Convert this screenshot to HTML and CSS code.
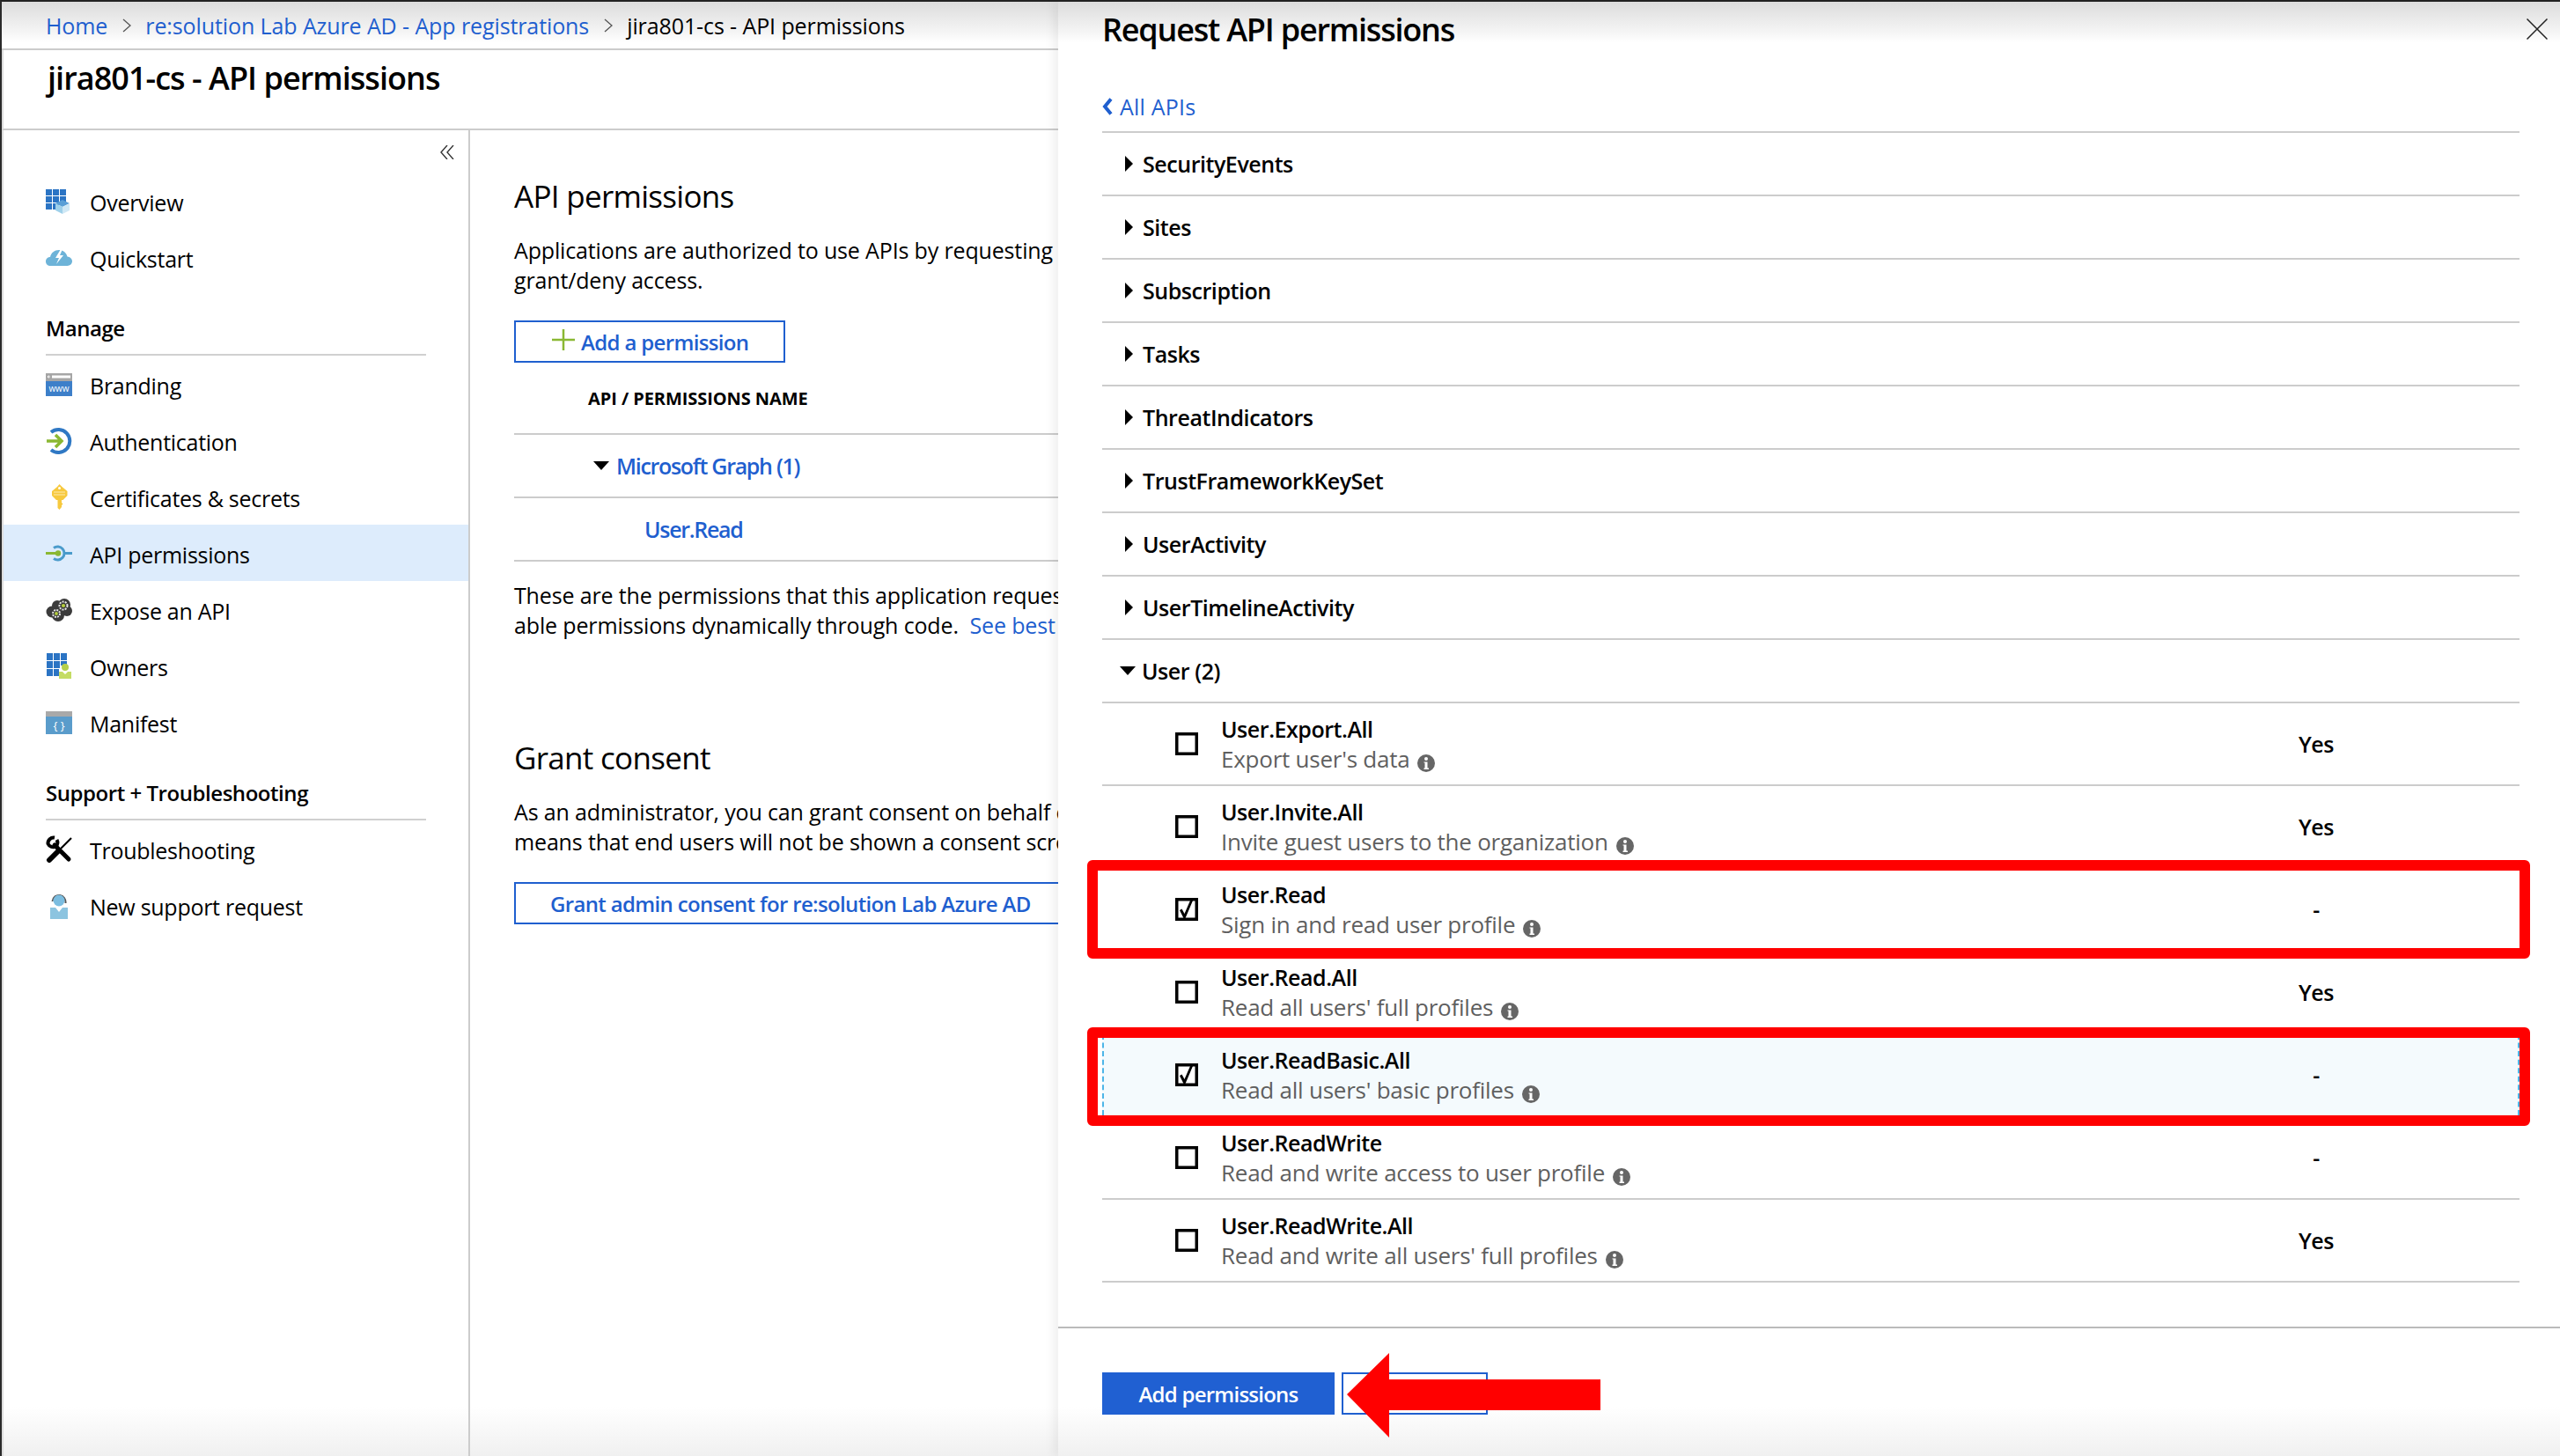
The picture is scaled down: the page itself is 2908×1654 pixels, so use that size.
FILE: index.html
```html
<!DOCTYPE html>
<html lang="en">
<head>
<meta charset="utf-8">
<title>jira801-cs - API permissions</title>
<link rel="stylesheet" href="styles.css">
</head>
<body>
<div class="page">
  <div class="blade">
    <nav class="crumbs">
      <a href="#">Home</a>
      <svg class="crumb-sep" viewBox="0 0 10 16"><path d="M1 1l8 7-8 7"/></svg>
      <a href="#">re:solution Lab Azure AD - App registrations</a>
      <svg class="crumb-sep" viewBox="0 0 10 16"><path d="M1 1l8 7-8 7"/></svg>
      <span>jira801-cs - API permissions</span>
    </nav>
    <h1 class="blade-title">jira801-cs - API permissions</h1>
    <div class="blade-body">
      <aside class="nav">
        <div class="collapse"><svg viewBox="0 0 16 16"><path d="M8 0L1 8l7 8M15 0L8 8l7 8"/></svg></div>
        <a class="nav-item" href="#">
          <svg class="ico" viewBox="0 0 30 32"><g fill="#2b74c4"><rect x="0" y="3" width="7" height="7"/><rect x="8" y="3" width="7" height="7"/><rect x="16" y="3" width="7" height="7"/><rect x="0" y="11" width="7" height="7"/><rect x="8" y="11" width="7" height="7"/><rect x="16" y="11" width="7" height="7"/><rect x="0" y="19" width="7" height="7"/><rect x="8" y="19" width="7" height="7"/></g><path fill="#5a9fd6" d="M19 15l8 4-8 4-8-4z"/><path fill="#9ed0ea" d="M11 19l8 4v8l-8-4z"/><path fill="#cfe8f5" d="M27 19l-8 4v8l8-4z"/></svg>
          <span>Overview</span></a>
        <a class="nav-item" href="#">
          <svg class="ico" viewBox="0 0 30 32"><path fill="#6db3d8" d="M5 26c-3 0-5-2.300-5-5s2-5 5-5c1-5 5-8 10-8 4.500 0 8.500 3 9.500 7.500 3 .2 5.500 2.400 5.500 5.300 0 3-2.500 5.200-5.500 5.200z"/><path fill="#fff" d="M17 7l-6 10h4l-3 7 8-10h-4l3-7z"/></svg>
          <span>Quickstart</span></a>
        <h2 class="nav-head">Manage</h2>
        <a class="nav-item" href="#">
          <svg class="ico" viewBox="0 0 30 32"><rect y="4" width="30" height="26" fill="#3d7fc9"/><rect y="4" width="30" height="9" fill="#a6a6a6"/><rect x="7" y="6.500" width="21" height="3" fill="#fff"/><path d="M5 8H2m1.500-1.500L2 8l1.500 1.500" stroke="#fff" fill="none"/><text x="15" y="25" class="ico-text">www</text></svg>
          <span>Branding</span></a>
        <a class="nav-item" href="#">
          <svg class="ico" viewBox="0 0 30 32"><path fill="none" stroke="#2f78c4" stroke-width="4" d="M6 7A13 13 0 1 1 6 27"/><path fill="none" stroke="#8ab833" stroke-width="3.500" d="M1 17h17M11 10l7 7-7 7"/></svg>
          <span>Authentication</span></a>
        <a class="nav-item" href="#">
          <svg class="ico" viewBox="0 0 30 32"><path fill="#f7c93e" d="M15.500 2l3 3 6 5v5l-5 5h-1.500v3l1.500 1.500-1.500 1.500v2l-2.500 3-2-2V20h-1.500l-5-5v-5l6-5z"/><circle cx="15.500" cy="6.500" r="1.500" fill="#fff"/><path stroke="#fbe08a" stroke-width="1.500" d="M9 11h13M9 14h13"/></svg>
          <span>Certificates &amp; secrets</span></a>
        <a class="nav-item active" href="#">
          <svg class="ico" viewBox="0 0 30 32"><path fill="none" stroke="#4a9bcb" stroke-width="3" d="M9 10.500a7.500 7.500 0 1 1 0 12M22 16.500h8"/><path stroke="#8ab833" stroke-width="3" d="M0 16.500h14"/><circle cx="14" cy="16.500" r="3.200" fill="#8ab833"/></svg>
          <span>API permissions</span></a>
        <a class="nav-item" href="#">
          <svg class="ico" viewBox="0 0 30 32"><g fill="#3b3b3b"><circle cx="7" cy="19" r="6.500"/><circle cx="13" cy="12" r="6"/><circle cx="21" cy="11" r="7"/><circle cx="24" cy="18" r="6"/><circle cx="14" cy="23" r="7"/></g><g fill="none" stroke="#e8e8e8"><circle cx="12" cy="21" r="4" stroke-width="2" stroke-dasharray="2 1.100"/><circle cx="20" cy="12" r="4.500" stroke-width="2" stroke-dasharray="2 1.200"/></g><circle cx="12" cy="21" r="1.900" fill="#b6cf3f"/><circle cx="20" cy="12" r="2.100" fill="#b6cf3f"/></svg>
          <span>Expose an API</span></a>
        <a class="nav-item" href="#">
          <svg class="ico" viewBox="0 0 30 32"><g fill="#2b74c4"><rect x="1" y="2" width="7" height="8"/><rect x="9" y="2" width="7" height="8"/><rect x="17" y="2" width="7" height="8"/><rect x="1" y="11" width="7" height="8"/><rect x="9" y="11" width="7" height="8"/><rect x="17" y="11" width="7" height="5"/><rect x="1" y="20" width="7" height="8"/><rect x="9" y="20" width="6" height="8"/></g><circle cx="22" cy="18" r="4" fill="#b5d04a"/><path fill="#c4dc64" d="M15 23h4l3 3 3-3h4v8H15z"/></svg>
          <span>Owners</span></a>
        <a class="nav-item" href="#">
          <svg class="ico" viewBox="0 0 30 32"><rect y="4" width="30" height="6" fill="#a9a9a9"/><rect y="10" width="30" height="20" fill="#5a9ccb"/><text x="15" y="25" class="ico-text ico-brace">{ }</text></svg>
          <span>Manifest</span></a>
        <h2 class="nav-head">Support + Troubleshooting</h2>
        <a class="nav-item" href="#">
          <svg class="ico" viewBox="0 0 30 32"><path stroke="#000" stroke-width="2.200" d="M29 4L17 16"/><path stroke="#000" stroke-width="6" stroke-linecap="round" d="M14 19L4 29"/><path stroke="#000" stroke-width="5" stroke-linecap="round" d="M10 12l16 16"/><path fill="none" stroke="#000" stroke-width="4" d="M10 3.500a6.500 6.500 0 0 0-7.500 7 6.500 6.500 0 0 0 9 3 6.500 6.500 0 0 0 1-7.500"/></svg>
          <span>Troubleshooting</span></a>
        <a class="nav-item" href="#">
          <svg class="ico" viewBox="0 0 30 32"><path fill="none" stroke="#555" stroke-width="2" d="M7.500 12a7.500 8 0 1 1 15 2"/><circle cx="15" cy="11" r="6.500" fill="#7bbde0"/><path fill="#8cc4e0" d="M5 19h6l4 5 4-5h6v13H5z"/></svg>
          <span>New support request</span></a>
      </aside>
      <main class="content">
        <h2 class="section-title">API permissions</h2>
        <p class="copy"><span>Applications are authorized to use APIs by requesting</span><span>grant/deny access.</span></p>
        <button class="outline-btn add-btn" type="button"><svg class="plus" viewBox="0 0 26 24"><path d="M13 0v24M0 12h26"/></svg>Add a permission</button>
        <div class="table">
          <div class="table-head">API / PERMISSIONS NAME</div>
          <div class="table-row table-group"><i class="caret-down small"></i><a href="#">Microsoft Graph (1)</a></div>
          <div class="table-row table-item"><a href="#">User.Read</a></div>
        </div>
        <p class="copy after-table"><span>These are the permissions that this application requests</span><span>able permissions dynamically through code.&nbsp; <a href="#">See best</a></span></p>
        <h2 class="section-title grant">Grant consent</h2>
        <p class="copy"><span>As an administrator, you can grant consent on behalf of</span><span>means that end users will not be shown a consent screen</span></p>
        <button class="outline-btn grant-btn" type="button">Grant admin consent for re:solution Lab Azure AD</button>
      </main>
    </div>
  </div>

  <section class="panel">
    <header class="panel-head">
      <h2 class="panel-title">Request API permissions</h2>
      <svg class="close" viewBox="0 0 24 24"><path d="M0.500 0.500l23 23M23.500 0.500l-23 23"/></svg>
    </header>
    <div class="panel-scroll">
      <a class="back" href="#"><svg viewBox="0 0 12 20"><path d="M10 1.500L3 10l7 8.500"/></svg>All APIs</a>
      <div class="groups">
        <div class="group"><i class="caret-right"></i>SecurityEvents</div>
        <div class="group"><i class="caret-right"></i>Sites</div>
        <div class="group"><i class="caret-right"></i>Subscription</div>
        <div class="group"><i class="caret-right"></i>Tasks</div>
        <div class="group"><i class="caret-right"></i>ThreatIndicators</div>
        <div class="group"><i class="caret-right"></i>TrustFrameworkKeySet</div>
        <div class="group"><i class="caret-right"></i>UserActivity</div>
        <div class="group"><i class="caret-right"></i>UserTimelineActivity</div>
        <div class="group"><i class="caret-down"></i>User (2)</div>

        <div class="perm">
          <svg class="check" viewBox="0 0 26 26"><rect x="1.750" y="1.750" width="22.500" height="22.500"/></svg>
          <div class="perm-text"><div class="perm-name">User.Export.All</div><div class="perm-desc">Export user's data<svg class="info" viewBox="0 0 20 20"><circle cx="10" cy="10" r="10"/><circle class="info-i" cx="10" cy="5" r="2"/><path class="info-i" d="M7.500 8.500h4v7h1.500v1.500H7.500v-1.500h1v-6h-1z"/></svg></div></div>
          <div class="perm-admin">Yes</div>
        </div>
        <div class="perm">
          <svg class="check" viewBox="0 0 26 26"><rect x="1.750" y="1.750" width="22.500" height="22.500"/></svg>
          <div class="perm-text"><div class="perm-name">User.Invite.All</div><div class="perm-desc">Invite guest users to the organization<svg class="info" viewBox="0 0 20 20"><circle cx="10" cy="10" r="10"/><circle class="info-i" cx="10" cy="5" r="2"/><path class="info-i" d="M7.500 8.500h4v7h1.500v1.500H7.500v-1.500h1v-6h-1z"/></svg></div></div>
          <div class="perm-admin">Yes</div>
        </div>
        <div class="perm mark-a">
          <svg class="check" viewBox="0 0 26 26"><rect x="1.750" y="1.750" width="22.500" height="22.500"/><path class="tick" d="M5 14l2.500-1.500 3 5.500L17 3h3L11.500 23h-2z"/></svg>
          <div class="perm-text"><div class="perm-name">User.Read</div><div class="perm-desc">Sign in and read user profile<svg class="info" viewBox="0 0 20 20"><circle cx="10" cy="10" r="10"/><circle class="info-i" cx="10" cy="5" r="2"/><path class="info-i" d="M7.500 8.500h4v7h1.500v1.500H7.500v-1.500h1v-6h-1z"/></svg></div></div>
          <div class="perm-admin">-</div>
        </div>
        <div class="perm">
          <svg class="check" viewBox="0 0 26 26"><rect x="1.750" y="1.750" width="22.500" height="22.500"/></svg>
          <div class="perm-text"><div class="perm-name">User.Read.All</div><div class="perm-desc">Read all users' full profiles<svg class="info" viewBox="0 0 20 20"><circle cx="10" cy="10" r="10"/><circle class="info-i" cx="10" cy="5" r="2"/><path class="info-i" d="M7.500 8.500h4v7h1.500v1.500H7.500v-1.500h1v-6h-1z"/></svg></div></div>
          <div class="perm-admin">Yes</div>
        </div>
        <div class="perm mark-b">
          <svg class="check" viewBox="0 0 26 26"><rect x="1.750" y="1.750" width="22.500" height="22.500"/><path class="tick" d="M5 14l2.500-1.500 3 5.500L17 3h3L11.500 23h-2z"/></svg>
          <div class="perm-text"><div class="perm-name">User.ReadBasic.All</div><div class="perm-desc">Read all users' basic profiles<svg class="info" viewBox="0 0 20 20"><circle cx="10" cy="10" r="10"/><circle class="info-i" cx="10" cy="5" r="2"/><path class="info-i" d="M7.500 8.500h4v7h1.500v1.500H7.500v-1.500h1v-6h-1z"/></svg></div></div>
          <div class="perm-admin">-</div>
        </div>
        <div class="perm">
          <svg class="check" viewBox="0 0 26 26"><rect x="1.750" y="1.750" width="22.500" height="22.500"/></svg>
          <div class="perm-text"><div class="perm-name">User.ReadWrite</div><div class="perm-desc">Read and write access to user profile<svg class="info" viewBox="0 0 20 20"><circle cx="10" cy="10" r="10"/><circle class="info-i" cx="10" cy="5" r="2"/><path class="info-i" d="M7.500 8.500h4v7h1.500v1.500H7.500v-1.500h1v-6h-1z"/></svg></div></div>
          <div class="perm-admin">-</div>
        </div>
        <div class="perm">
          <svg class="check" viewBox="0 0 26 26"><rect x="1.750" y="1.750" width="22.500" height="22.500"/></svg>
          <div class="perm-text"><div class="perm-name">User.ReadWrite.All</div><div class="perm-desc">Read and write all users' full profiles<svg class="info" viewBox="0 0 20 20"><circle cx="10" cy="10" r="10"/><circle class="info-i" cx="10" cy="5" r="2"/><path class="info-i" d="M7.500 8.500h4v7h1.500v1.500H7.500v-1.500h1v-6h-1z"/></svg></div></div>
          <div class="perm-admin">Yes</div>
        </div>
      </div>
    </div>
    <footer class="panel-foot">
      <button class="primary-btn" type="button">Add permissions</button>
      <span class="ghost-btn"></span>
      <svg class="arrow" viewBox="0 0 288 96"><path d="M0 47L48 0v30h240v35H48v31z"/></svg>
    </footer>
  </section>
</div>
</body>
</html>
```

FILE: styles.css
```css
* { box-sizing: border-box; }
html, body { margin: 0; padding: 0; }
body {
  width: 2908px;
  height: 1654px;
  overflow: hidden;
  font-family: "Open Sans", "Liberation Sans", sans-serif;
  font-size: 25px;
  letter-spacing: -0.27px;
  color: #000;
  background: #fff;
}
a { color: #1f5fcf; text-decoration: none; }
h1, h2, p { margin: 0; }
.page {
  display: flex;
  width: 2908px;
  height: 1654px;
  border-top: 2px solid #222;
  border-left: 2px solid #2a2a2a;
  background:
    linear-gradient(#dcdcdc, #f6f6f6 36px, #fff 46px, #fff 0) top / 100% 46px no-repeat,
    linear-gradient(#fff, #f0f0f0) bottom / 100% 56px no-repeat,
    #fff;
}

/* left blade */
.blade { width: 1200px; flex: none; overflow: hidden; }
.crumbs {
  display: flex;
  align-items: center;
  height: 55px;
  padding-left: 50px;
  border-bottom: 2px solid #ccc;
  white-space: nowrap;
  letter-spacing: -0.1px;
}
.crumb-sep { width: 10px; height: 16px; margin: 0 16px 0 17px; }
.crumb-sep path { fill: none; stroke: #555; stroke-width: 1.3; }
.blade-title {
  height: 91px;
  padding: 0 0 0 50px;
  font-size: 36px;
  line-height: 64px;
  font-weight: 600;
  letter-spacing: -0.96px;
  border-bottom: 2px solid #ccc;
  border-left: 2px solid #ddd;
  white-space: nowrap;
}
.blade-body { display: flex; height: 1506px; border-left: 2px solid #ddd; }

.nav { width: 530px; flex: none; border-right: 2px solid #ccc; }
.collapse { display: flex; justify-content: flex-end; align-items: center; height: 48px; padding: 2px 16px 0 0; }
.collapse svg { width: 16px; height: 16px; }
.collapse path { fill: none; stroke: #333; stroke-width: 1.4; }
.nav-item {
  display: flex;
  align-items: center;
  gap: 20px;
  height: 64px;
  padding-left: 48px;
  color: #000;
}
.nav-item span { position: relative; top: 2px; }
.nav-item.active { background: #ddecfc; }
.ico { width: 30px; height: 32px; flex: none; }
.ico-text { font-size: 10px; fill: #fff; text-anchor: middle; letter-spacing: 0; }
.ico-brace { font-size: 13px; }
.nav-head {
  height: 80px;
  margin: 0 48px 0 48px;
  padding-top: 33px;
  font-size: 24px;
  line-height: 32px;
  font-weight: 600;
  letter-spacing: -0.45px;
  border-bottom: 2px solid #d0d0d0;
}

.content { flex: 1; min-width: 0; padding-left: 50px; white-space: nowrap; }
.section-title { margin-top: 51px; font-size: 35px; line-height: 48px; font-weight: 400; letter-spacing: -0.7px; }
.section-title.grant { margin-top: 110px; }
.copy { margin-top: 20px; line-height: 34px; letter-spacing: -0.15px; }
.copy span { display: block; }
.copy.after-table { margin-top: 21px; }
.outline-btn {
  display: flex;
  align-items: center;
  height: 48px;
  margin: 0;
  background: #fff;
  border: 2.5px solid #1f5fcf;
  border-radius: 0;
  color: #1f5fcf;
  font: 600 24px "Open Sans", sans-serif;
  letter-spacing: -0.65px;
  white-space: nowrap;
}
.add-btn { width: 308px; margin-top: 29px; padding: 0 0 0 41px; }
.plus { width: 26px; height: 24px; margin: -4px 7px 0 0; }
.plus path { stroke: #8ab833; stroke-width: 2.5; fill: none; }
.grant-btn { width: 660px; margin-top: 29px; padding: 0 0 0 39px; }
.table { width: 900px; }
.table-head {
  display: flex;
  align-items: center;
  height: 82px;
  padding-left: 84px;
  font-size: 20px;
  font-weight: 700;
  letter-spacing: -0.07px;
  border-bottom: 2px solid #ccc;
}
.table-row { display: flex; align-items: center; height: 72px; border-bottom: 2px solid #ccc; font-weight: 600; letter-spacing: -1.3px; }
.table-group { padding-left: 90px; }
.table-item { padding-left: 148px; }
.caret-down.small { margin: 0 8px 0 0; }

/* right panel */
.panel {
  position: relative;
  display: flex;
  flex-direction: column;
  width: 1706px;
  flex: none;
  box-shadow: -6px 0 10px rgba(0, 0, 0, 0.06);
}
.panel-head {
  display: flex;
  justify-content: space-between;
  align-items: center;
  height: 62px;
  padding: 0 14px 0 50px;
}
.panel-title { font-size: 36px; font-weight: 600; letter-spacing: -1.2px; }
.close { width: 24px; height: 24px; }
.close path { fill: none; stroke: #222; stroke-width: 1.5; }
.panel-scroll { padding: 37px 46px 0 50px; }
.back { display: flex; align-items: center; height: 40px; margin-bottom: 8px; letter-spacing: 0.2px; }
.back svg { width: 12px; height: 20px; margin-right: 8px; }
.back path { fill: none; stroke: #1f5fcf; stroke-width: 4; }
.groups { border-top: 2px solid #ccc; }
.group {
  display: flex;
  align-items: center;
  height: 72px;
  border-bottom: 2px solid #ccc;
  font-weight: 600;
  letter-spacing: -0.45px;
}
.caret-right {
  width: 0;
  height: 0;
  margin: 0 11px 0 26px;
  border-style: solid;
  border-width: 9.500px 0 9.500px 9px;
  border-color: transparent transparent transparent #000;
}
.caret-down {
  width: 0;
  height: 0;
  margin: 0 7px 0 20px;
  border-style: solid;
  border-width: 10px 9.500px 0;
  border-color: #000 transparent transparent;
}
.perm {
  position: relative;
  display: flex;
  align-items: center;
  height: 94px;
  padding-left: 83px;
  border-bottom: 2px solid #ccc;
}
.check { width: 26px; height: 26px; flex: none; margin-right: 26px; }
.check rect { fill: #fff; stroke: #000; stroke-width: 3.5; }
.tick { fill: #000; }
.perm-name { font-weight: 600; line-height: 34px; letter-spacing: -0.45px; }
.perm-desc { display: flex; align-items: center; color: #5f5f5f; font-size: 26px; line-height: 34px; font-weight: 500; letter-spacing: -0.24px; }
.info { width: 20px; height: 20px; margin: 10px 0 0 9px; }
.info circle:first-child { fill: #666; }
.info-i { fill: #fff; }
.perm-admin { width: 80px; margin: 0 191px 0 auto; text-align: center; font-weight: 600; letter-spacing: -0.4px; }
.mark-a::after, .mark-b::after {
  content: "";
  position: absolute;
  left: -17px;
  right: -12px;
  border: 12px solid #f00;
  border-radius: 6px;
}
.mark-a::after { top: -10px; bottom: -10px; }
.mark-b::after { top: -8px; bottom: -12px; }
.mark-b { background: #f4fafd; }
.mark-b::before {
  content: "";
  position: absolute;
  inset: 0;
  border-left: 2px dashed #4db5e8;
  border-right: 2px dashed #4db5e8;
}

.panel-foot {
  position: relative;
  display: flex;
  gap: 8px;
  margin-top: 50px;
  padding: 50px 0 0 50px;
  border-top: 2px solid #bbb;
}
.primary-btn {
  width: 264px;
  height: 48px;
  padding: 0;
  background: #2060d2;
  border: 0;
  color: #fff;
  font: 600 24px "Open Sans", sans-serif;
  letter-spacing: -0.75px;
}
.ghost-btn { width: 166px; height: 48px; border: 2.500px solid #1f5fcf; }
.arrow { position: absolute; left: 328px; top: 28px; width: 288px; height: 96px; }
.arrow path { fill: #f00; }
```
